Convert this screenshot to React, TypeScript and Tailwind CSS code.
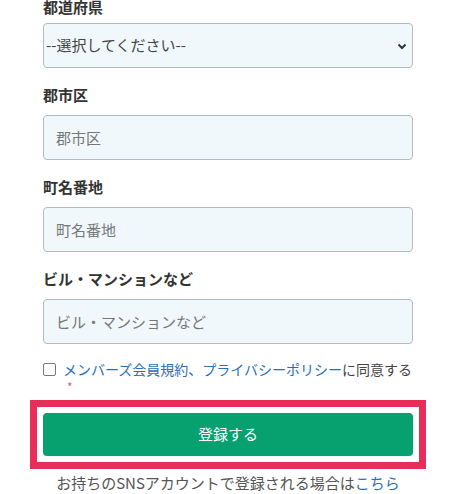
import type React from "react";

const fields = [
  { label: "郡市区", placeholder: "郡市区" },
  { label: "町名番地", placeholder: "町名番地" },
  { label: "ビル・マンションなど", placeholder: "ビル・マンションなど" },
];

const App: React.FC = () => {
  return (
    <div
      className="w-[456px] h-[494px] overflow-hidden bg-white text-[#333]"
      style={{ fontFamily: '"Noto Sans CJK JP", "Noto Sans", sans-serif' }}
    >
      <div className="px-[43px] -mt-[5px]">
        {/* Prefecture */}
        <div className="mb-[15px]">
          <label className="block text-[15px] font-bold leading-[24px] mb-[4px]">
            都道府県
          </label>
          <div className="relative">
            <select className="block w-full h-[45px] appearance-none bg-[#f0f8fc] border border-[#b3bbc2] rounded-[4px] pl-[2px] pr-8 text-[15px] text-[#444] outline-none">
              <option>--選択してください--</option>
            </select>
            <svg
              className="absolute right-[6px] top-1/2 -translate-y-1/2 pointer-events-none"
              width="10"
              height="8"
              viewBox="0 0 10 8"
            >
              <path d="M1.5 2.5 L5 6 L8.5 2.5" fill="none" stroke="#333" strokeWidth="2" />
            </svg>
          </div>
        </div>

        {fields.map((f) => (
          <div key={f.label} className="mb-[15px] last:mb-0">
            <label className="block text-[15px] font-bold leading-[24px] mb-[8px]">
              {f.label}
            </label>
            <input
              className="block w-full h-[45px] bg-[#f0f8fc] border border-[#b3bbc2] rounded-[4px] px-[12px] text-[15px] placeholder:text-[#777] outline-none"
              placeholder={f.placeholder}
              type="text"
            />
          </div>
        ))}

        {/* Agreement */}
        <div className="mt-[6px] flex items-center gap-[7px] text-[14px] leading-[20px]">
          <span className="w-[13px] h-[13px] shrink-0 border border-[#777] rounded-[2px] bg-white"></span>
          <p className="whitespace-nowrap text-[#444]">
            <a className="text-[#2a6ebb]" href="#">
              メンバーズ会員規約
            </a>
            <span className="text-[#2a6ebb]">、</span>
            <a className="text-[#2a6ebb]" href="#">
              プライバシーポリシー
            </a>
            に同意する
          </p>
        </div>
        <div className="pl-[24px] text-[12px] leading-[16px] text-[#e0607a]">*</div>

        {/* Submit */}
        <div className="mt-[5px] -mx-[13px] border-[7px] border-[#e62e58] p-[6px]">
          <button className="w-full h-[43px] bg-[#07a06f] rounded-[4px] text-white text-[15px]">
            登録する
          </button>
        </div>

        <p className="mt-[4px] text-center text-[15px] leading-[20px] text-[#555] whitespace-nowrap">
          お持ちのSNSアカウントで登録される場合は
          <a className="text-[#2a6ebb]" href="#">
            こちら
          </a>
        </p>
      </div>
    </div>
  );
};

export default App;
